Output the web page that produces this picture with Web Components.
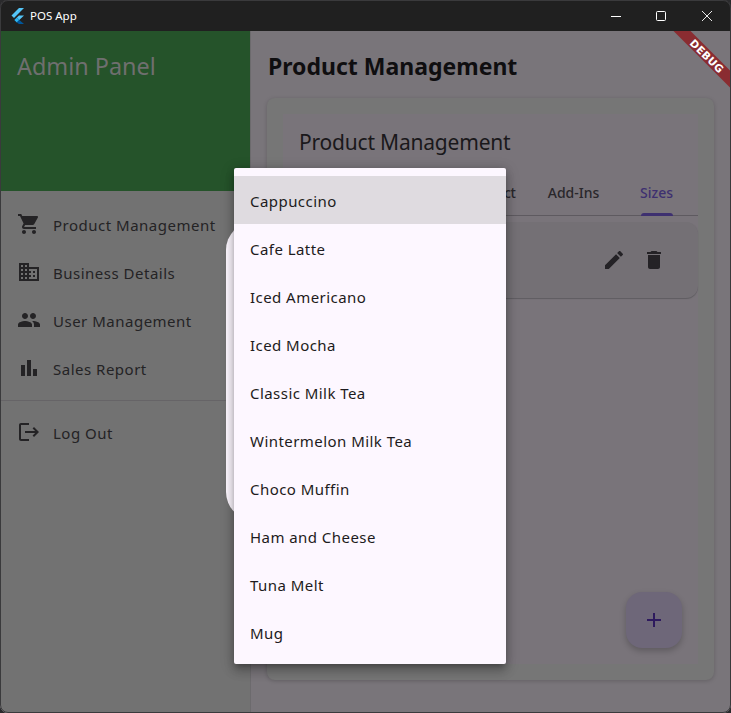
<!DOCTYPE html>
<html>
	<head>
		<title>POS App</title>
		<style>
			html, body {
				margin: 0;
				height: 100%;
				background: #2a2a2c;
			}
			body {
				font-family: "Noto Sans", "Open Sans", sans-serif;
			}
		</style>
	</head>
	<body>
		<pos-window>
			<title-bar slot="bar"></title-bar>
			<admin-sidebar slot="side"></admin-sidebar>
			<main-pane slot="main"></main-pane>
			<debug-banner slot="over"></debug-banner>
			<blank-dialog slot="over"></blank-dialog>
			<drop-menu slot="over"></drop-menu>
		</pos-window>

		<script type="module">
			const ICONS = {
				cart: 'M7 18c-1.1 0-1.99.9-1.99 2S5.9 22 7 22s2-.9 2-2-.9-2-2-2zM1 2v2h2l3.6 7.59-1.35 2.45c-.16.28-.25.61-.25.96 0 1.1.9 2 2 2h12v-2H7.42c-.14 0-.25-.11-.25-.25l.03-.12.9-1.63h7.45c.75 0 1.41-.41 1.75-1.03l3.58-6.49c.08-.14.12-.31.12-.48 0-.55-.45-1-1-1H5.21l-.94-2H1zm16 16c-1.1 0-1.99.9-1.99 2s.89 2 1.99 2 2-.9 2-2-.9-2-2-2z',
				business: 'M12 7V3H2v18h20V7H12zM6 19H4v-2h2v2zm0-4H4v-2h2v2zm0-4H4V9h2v2zm0-4H4V5h2v2zm4 12H8v-2h2v2zm0-4H8v-2h2v2zm0-4H8V9h2v2zm0-4H8V5h2v2zm10 12h-8v-2h2v-2h-2v-2h2v-2h-2V9h8v10zm-2-8h-2v2h2v-2zm0 4h-2v2h2v-2z',
				people: 'M16 11c1.66 0 2.99-1.34 2.99-3S17.66 5 16 5c-1.66 0-3 1.34-3 3s1.34 3 3 3zm-8 0c1.66 0 2.99-1.34 2.99-3S9.66 5 8 5C6.34 5 5 6.34 5 8s1.34 3 3 3zm0 2c-2.33 0-7 1.17-7 3.5V19h14v-2.5c0-2.33-4.67-3.5-7-3.5zm8 0c-.29 0-.62.02-.97.05 1.16.84 1.97 1.97 1.97 3.45V19h6v-2.5c0-2.33-4.67-3.5-7-3.5z',
				chart: 'M4 9h4v11H4zM16 13h4v7h-4zM10 4h4v16h-4z',
				logout: 'M17 7l-1.41 1.41L18.17 11H8v2h10.17l-2.58 2.58L17 17l5-5zM4 5h8V3H4c-1.1 0-2 .9-2 2v14c0 1.1.9 2 2 2h8v-2H4V5z',
				edit: 'M3 17.25V21h3.75L17.81 9.94l-3.75-3.75L3 17.25zM20.71 7.04c.39-.39.39-1.02 0-1.41l-2.34-2.34c-.39-.39-1.02-.39-1.41 0l-1.83 1.83 3.75 3.75 1.83-1.83z',
				trash: 'M6 19c0 1.1.9 2 2 2h8c1.1 0 2-.9 2-2V7H6v12zM19 4h-3.5l-1-1h-5l-1 1H5v2h14V4z',
				add: 'M19 13h-6v6h-2v-6H5v-2h6V5h2v6h6v2z'
			};

			// small helper, every element below just sets its html in the constructor
			class Base extends HTMLElement {
				render(html) {
					this.attachShadow({ mode: 'open' }).innerHTML = html;
				}
			}

			class MatIcon extends Base {
				constructor() {
					super();
					this.render(`
						<style>
							:host { display: block; width: 24px; height: 24px; flex: none; }
							svg { display: block; fill: currentColor; }
						</style>
						<svg width="24" height="24" viewBox="0 0 24 24"><path d="${ICONS[this.getAttribute('name')]}"></path></svg>
					`);
				}
			}
			customElements.define('mat-icon', MatIcon);

			class PosWindow extends Base {
				constructor() {
					super();
					this.render(`
						<style>
							:host {
								display: block;
								position: relative;
								width: 731px;
								height: 713px;
								box-sizing: border-box;
								overflow: hidden;
								border-radius: 8px;
								background: #79757a;
							}
							.body { display: flex; height: 682px; }
							.outline {
								position: absolute;
								inset: 0;
								border: 1px solid #3a3a3c;
								border-radius: 8px;
								pointer-events: none;
							}
						</style>
						<slot name="bar"></slot>
						<div class="body">
							<slot name="side"></slot>
							<slot name="main"></slot>
						</div>
						<slot name="over"></slot>
						<div class="outline"></div>
					`);
				}
			}
			customElements.define('pos-window', PosWindow);

			class TitleBar extends Base {
				constructor() {
					super();
					this.render(`
						<style>
							:host {
								display: flex;
								align-items: center;
								height: 31px;
								padding-right: 1px;
								background: #202020;
								color: #fff;
								font: 11.5px "Noto Sans", "Open Sans", sans-serif;
							}
							.logo { margin-left: 10px; margin-right: 5px; }
							.name { flex: 1; }
							.ctl { width: 46px; height: 31px; display: flex; align-items: center; justify-content: center; }
							.ctl.min { width: 45px; }
							svg { display: block; }
						</style>
						<svg class="logo" width="15" height="16" viewBox="0 0 15 16">
							<path d="M9 0h5L4 10 1.500 7.500z" fill="#54c5f8"></path>
							<path d="M9 7.400h5L9.300 12 6.800 9.600z" fill="#54c5f8"></path>
							<path d="M6.800 9.600 9.300 12 6.800 14.500 4.300 12z" fill="#29b6f6"></path>
							<path d="M6.800 14.500 9.300 12 14 16H9z" fill="#01579b"></path>
						</svg>
						<span class="name">POS App</span>
						<span class="ctl min"><svg width="10" height="10"><path d="M0 5.500h10" stroke="#fff"></path></svg></span>
						<span class="ctl"><svg width="10" height="10"><rect x=".5" y=".5" width="9" height="9" rx="1" fill="none" stroke="#fff"></rect></svg></span>
						<span class="ctl"><svg width="10" height="10"><path d="M0 0l10 10M10 0 0 10" stroke="#fff" stroke-width=".9"></path></svg></span>
					`);
				}
			}
			customElements.define('title-bar', TitleBar);

			class NavItem extends Base {
				constructor() {
					super();
					this.render(`
						<style>
							:host {
								display: flex;
								align-items: center;
								height: 48px;
								padding-left: 17px;
								gap: 12px;
								color: #242325;
								font-size: 15px;
								letter-spacing: .5px;
								white-space: nowrap;
							}
							mat-icon { margin-bottom: 2px; }
						</style>
						<mat-icon name="${this.getAttribute('icon')}"></mat-icon>
						<span><slot></slot></span>
					`);
				}
			}
			customElements.define('nav-item', NavItem);

			class AdminSidebar extends Base {
				constructor() {
					super();
					this.render(`
						<style>
							:host {
								display: block;
								width: 250px;
								flex: none;
								background: #727272;
								box-shadow: 1px 0 0 #6c6a6d;
							}
							.head {
								height: 160px;
								box-sizing: border-box;
								background: #25532a;
								color: #6f6f6f;
								font-size: 23.4px;
								line-height: 32px;
								padding: 19px 0 0 17px;
							}
							.list { padding-top: 10px; }
							hr { border: 0; height: 1px; margin: 7px 0 8px; background: #666467; }
						</style>
						<div class="head">Admin Panel</div>
						<div class="list">
							<nav-item icon="cart">Product Management</nav-item>
							<nav-item icon="business">Business Details</nav-item>
							<nav-item icon="people">User Management</nav-item>
							<nav-item icon="chart">Sales Report</nav-item>
							<hr>
							<nav-item icon="logout">Log Out</nav-item>
						</div>
					`);
				}
			}
			customElements.define('admin-sidebar', AdminSidebar);

			class TabStrip extends Base {
				constructor() {
					super();
					this.render(`
						<style>
							:host {
								display: grid;
								grid-template-columns: repeat(5, 83px);
								height: 48px;
								border-bottom: 1px solid #5e5a60;
								box-sizing: border-box;
								font-size: 14px;
								font-weight: 500;
								color: #29272b;
							}
							div { position: relative; display: flex; align-items: center; justify-content: center; padding-top: 1px; }
							.first { grid-column: 3; letter-spacing: -.3px; }
							.on { color: #3e3070; }
							.on i {
								position: absolute;
								left: 50%;
								margin-left: -16px;
								bottom: -1px;
								width: 32px;
								height: 3px;
								border-radius: 3px 3px 0 0;
								background: #3e3070;
							}
						</style>
						<div class="first">Product</div>
						<div>Add-Ins</div>
						<div class="on">Sizes<i></i></div>
					`);
				}
			}
			customElements.define('tab-strip', TabStrip);

			class SizeCard extends Base {
				constructor() {
					super();
					this.render(`
						<style>
							:host {
								display: flex;
								align-items: center;
								justify-content: flex-end;
								gap: 16px;
								height: 76px;
								margin-top: 6px;
								padding: 0 32px 0 0;
								box-sizing: border-box;
								background: #747075;
								border-radius: 12px;
								box-shadow: 0 1px 1px #5f5c61;
								color: #242226;
							}
						</style>
						<mat-icon name="edit"></mat-icon>
						<mat-icon name="trash"></mat-icon>
					`);
				}
			}
			customElements.define('size-card', SizeCard);

			class MainPane extends Base {
				constructor() {
					super();
					this.render(`
						<style>
							:host {
								display: flex;
								flex-direction: column;
								flex: 1;
								min-width: 0;
								padding: 18px 17px 33px 17px;
								box-sizing: border-box;
								color: #1d1b1e;
							}
							h1 {
								margin: 0 0 15px 1px;
								font-size: 23px;
								line-height: 34px;
								font-weight: 700;
								color: #0f0e10;
							}
							.card {
								flex: 1;
								padding: 16px;
								background: #767676;
								border-radius: 8px;
								box-shadow: 0 1px 4px rgba(0,0,0,.18);
								display: flex;
							}
							.inner {
								flex: 1;
								position: relative;
								background: #79747a;
							}
							h2 {
								margin: 0;
								padding: 12px 16px 0;
								height: 42px;
								font-size: 21px;
								letter-spacing: -.2px;
								line-height: 32px;
								font-weight: 400;
								color: #1a181b;
							}
							.fab {
								position: absolute;
								right: 16px;
								bottom: 16px;
								width: 56px;
								height: 56px;
								border-radius: 16px;
								background: #6e6779;
								color: #2e1a5e;
								display: flex;
								align-items: center;
								justify-content: center;
								box-shadow: 0 3px 6px rgba(0,0,0,.22);
							}
						</style>
						<h1>Product Management</h1>
						<div class="card">
							<div class="inner">
								<h2>Product Management</h2>
								<tab-strip></tab-strip>
								<size-card></size-card>
								<div class="fab"><mat-icon name="add"></mat-icon></div>
							</div>
						</div>
					`);
				}
			}
			customElements.define('main-pane', MainPane);

			class DebugBanner extends Base {
				constructor() {
					super();
					this.render(`
						<style>
							:host {
								position: absolute;
								top: 31px;
								right: 0;
								width: 60px;
								height: 60px;
								overflow: hidden;
								pointer-events: none;
							}
							div {
								position: absolute;
								left: -24.500px;
								top: 18.500px;
								width: 120px;
								height: 12px;
								transform: rotate(45deg);
								background: #8a2c31;
								color: #fff;
								font: 900 10.500px/12px "DejaVu Sans", sans-serif;
								letter-spacing: .3px;
								text-align: center;
							}
						</style>
						<div>DEBUG</div>
					`);
				}
			}
			customElements.define('debug-banner', DebugBanner);

			class BlankDialog extends Base {
				constructor() {
					super();
					this.render(`
						<style>
							:host {
								position: absolute;
								left: 226px;
								top: 222px;
								width: 280px;
								height: 298px;
								border-radius: 28px;
								background: #fdf7ff;
							}
						</style>
					`);
				}
			}
			customElements.define('blank-dialog', BlankDialog);

			class MenuItem extends Base {
				constructor() {
					super();
					this.render(`
						<style>
							:host {
								display: flex;
								align-items: center;
								height: 48px;
								box-sizing: border-box;
								padding: 2px 16px 0;
								font-size: 15px;
								letter-spacing: .45px;
								color: #1d1b20;
							}
							:host([selected]) { background: #dfdbe0; }
						</style>
						<slot></slot>
					`);
				}
			}
			customElements.define('menu-item', MenuItem);

			class DropMenu extends Base {
				constructor() {
					super();
					this.render(`
						<style>
							:host {
								position: absolute;
								left: 234px;
								top: 168px;
								width: 272px;
								padding: 8px 0;
								background: #fdf7ff;
								border-radius: 2px;
								box-shadow: 0 5px 5px -3px rgba(0,0,0,.2), 0 8px 10px 1px rgba(0,0,0,.14), 0 3px 14px 2px rgba(0,0,0,.12), 0 0 8px rgba(0,0,0,.12);
							}
						</style>
						<menu-item selected>Cappuccino</menu-item>
						<menu-item>Cafe Latte</menu-item>
						<menu-item>Iced Americano</menu-item>
						<menu-item>Iced Mocha</menu-item>
						<menu-item>Classic Milk Tea</menu-item>
						<menu-item>Wintermelon Milk Tea</menu-item>
						<menu-item>Choco Muffin</menu-item>
						<menu-item>Ham and Cheese</menu-item>
						<menu-item>Tuna Melt</menu-item>
						<menu-item>Mug</menu-item>
					`);
				}
			}
			customElements.define('drop-menu', DropMenu);
		</script>
	</body>
</html>
